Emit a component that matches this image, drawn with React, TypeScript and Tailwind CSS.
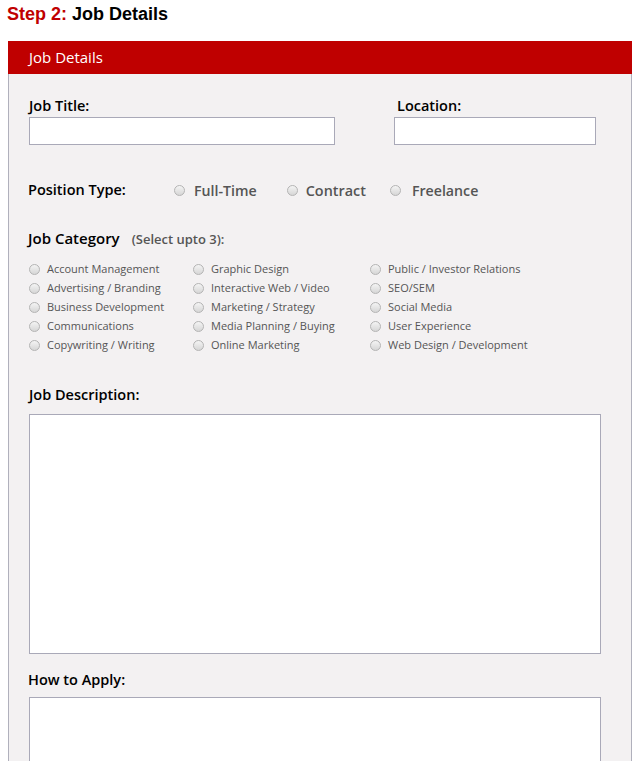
import React from 'react';

const cats: string[][] = [
  ['Account Management', 'Advertising / Branding', 'Business Development', 'Communications', 'Copywriting / Writing'],
  ['Graphic Design', 'Interactive Web / Video', 'Marketing / Strategy', 'Media Planning / Buying', 'Online Marketing'],
  ['Public / Investor Relations', 'SEO/SEM', 'Social Media', 'User Experience', 'Web Design / Development'],
];

function Radio() {
  return (
    <span className="w-[11px] h-[11px] inline-block shrink-0 rounded-full border border-[#b4b4b4] bg-gradient-to-b from-[#f4f4f4] to-[#d6d6d6]" />
  );
}

export default function App() {
  return (
    <div className="w-[641px] h-[761px] overflow-hidden bg-white" style={{ fontFamily: '"Open Sans", sans-serif' }}>
      <div className="pl-[7px] pt-[3px] h-[41px] text-[18px] leading-[22px] font-bold" style={{ fontFamily: '"Liberation Sans", Arial, sans-serif' }}>
        <span className="text-[#c00000]">Step 2:</span> <span className="text-black">Job Details</span>
      </div>

      <div className="ml-[8px] w-[624px]">
        <div className="h-[33px] bg-[#bf0000] pl-[21px] flex items-center text-white text-[15px]">Job Details</div>

        <div className="bg-[#f3f1f2] border-l border-r border-[#b0b0bc] h-[700px] pl-[20px]">
          {/* title + location */}
          <div className="flex pt-[22px]">
            <div className="w-[365px]">
              <div className="text-[14.5px] leading-[20px] font-semibold text-black">Job Title:</div>
              <div className="mt-[1px] w-[306px] h-[28px] bg-white border border-[#a9a9b8]" />
            </div>
            <div>
              <div className="ml-[3px] text-[14.5px] leading-[20px] font-semibold text-black">Location:</div>
              <div className="mt-[1px] w-[202px] h-[28px] bg-white border border-[#a9a9b8]" />
            </div>
          </div>

          {/* position type */}
          <div className="flex items-center mt-[35px] h-[20px] text-[14.5px] leading-[20px]">
            <div className="w-[146px] -ml-[1px] font-semibold text-black">Position Type:</div>
            <div className="flex items-center gap-[9px] text-[#555] font-semibold">
              <Radio />
              <span className="mt-[2px] text-[14.2px]">Full-Time</span>
            </div>
            <div className="flex items-center gap-[8px] ml-[30px] text-[#555] font-semibold">
              <Radio />
              <span className="mt-[2px] text-[14.4px]">Contract</span>
            </div>
            <div className="flex items-center gap-[11px] ml-[24px] text-[#555] font-semibold">
              <Radio />
              <span className="mt-[2px] text-[14.2px]">Freelance</span>
            </div>
          </div>

          {/* job category */}
          <div className="mt-[27px] flex items-baseline -ml-[1px]">
            <span className="text-[15px] font-semibold text-black">Job Category</span>
            <span className="ml-[12px] text-[13px] font-semibold text-[#555]">(Select upto 3):</span>
          </div>
          <div className="flex mt-[10px] text-[11px] text-[#555]">
            {cats.map((col, ci) => (
              <div key={ci} className={ci === 0 ? 'w-[164px]' : ci === 1 ? 'w-[177px]' : ''}>
                {col.map((c) => (
                  <div key={c} className="flex items-center h-[19px] gap-[7px]">
                    <Radio />
                    <span>{c}</span>
                  </div>
                ))}
              </div>
            ))}
          </div>

          {/* description */}
          <div className="mt-[30px] text-[14.5px] leading-[20px] font-semibold text-black">Job Description:</div>
          <div className="mt-[9px] w-[572px] h-[240px] bg-white border border-[#a9a9b8]" />

          <div className="mt-[16px] -ml-[1px] text-[14.5px] leading-[20px] font-semibold text-black">How to Apply:</div>
          <div className="mt-[7px] w-[572px] h-[120px] bg-white border border-[#a9a9b8]" />
        </div>
      </div>
    </div>
  );
}
